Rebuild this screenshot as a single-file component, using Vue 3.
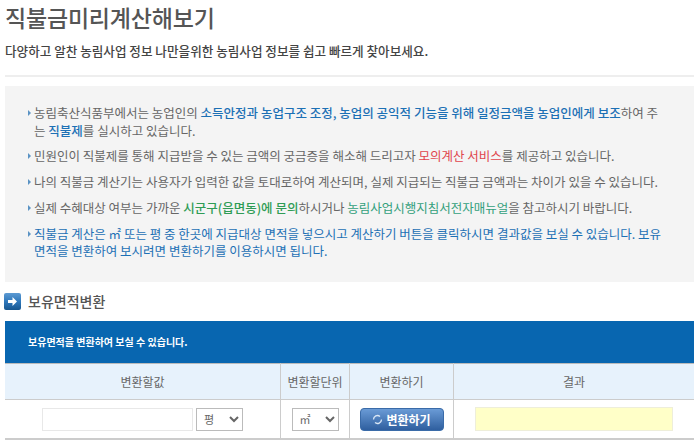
<template>
  <div class="page">
    <h1 class="title">직불금미리계산해보기</h1>
    <p class="lead">다양하고 알찬 농림사업 정보 나만을위한 농림사업 정보를 쉽고 빠르게 찾아보세요.</p>
    <hr class="rule" />

    <ul class="guide">
      <li>
        농림축산식품부에서는 농업인의 <b class="blue">소득안정과 농업구조 조정, 농업의 공익적 기능을 위해 일정금액을 농업인에게 보조</b>하여 주는 <b class="blue">직불제</b>를 실시하고 있습니다.
      </li>
      <li>민원인이 직불제를 통해 지급받을 수 있는 금액의 궁금증을 해소해 드리고자 <span class="red">모의계산 서비스</span>를 제공하고 있습니다.</li>
      <li>나의 직불금 계산기는 사용자가 입력한 값을 토대로하여 계산되며, 실제 지급되는 직불금 금액과는 차이가 있을 수 있습니다.</li>
      <li>실제 수혜대상 여부는 가까운 <b class="green">시군구(읍면동)에 문의</b>하시거나 <span class="teal">농림사업시행지침서전자매뉴얼</span>을 참고하시기 바랍니다.</li>
      <li class="blue">직불금 계산은 ㎡ 또는 평 중 한곳에 지급대상 면적을 넣으시고 계산하기 버튼을 클릭하시면 결과값을 보실 수 있습니다. 보유면적을 변환하여 보시려면 변환하기를 이용하시면 됩니다.</li>
    </ul>

    <h2 class="section">
      <svg class="section-icon" width="17" height="17" viewBox="0 0 17 17">
        <defs>
          <linearGradient id="iconFill" x1="0" y1="0" x2="0" y2="1">
            <stop offset="0" stop-color="#5c9ad2" />
            <stop offset="0.5" stop-color="#2f78bc" />
            <stop offset="1" stop-color="#17568f" />
          </linearGradient>
        </defs>
        <rect width="17" height="17" rx="2" fill="url(#iconFill)" />
        <path d="M4 7h4.500V4L13 8.500 8.500 13v-3H4z" fill="#fff" />
      </svg>
      보유면적변환
    </h2>

    <div class="banner">보유면적을 변환하여 보실 수 있습니다.</div>
    <table class="convert">
      <thead>
        <tr>
          <th class="col-value">변환할값</th>
          <th class="col-unit">변환할단위</th>
          <th class="col-action">변환하기</th>
          <th>결과</th>
        </tr>
      </thead>
      <tbody>
        <tr>
          <td>
            <div class="value-cell">
              <input class="field" type="text" />
              <select class="unit">
                <option>평</option>
              </select>
            </div>
          </td>
          <td>
            <select class="unit">
              <option>㎡</option>
            </select>
          </td>
          <td>
            <button class="convert-btn" type="button">
              <svg width="11" height="11" viewBox="0 0 11 11" fill="none" stroke="#dbe8f6" stroke-width="1.300">
                <path d="M1.500 5.500A4 4 0 0 1 8 2.400" />
                <path d="M9.500 5.500A4 4 0 0 1 3 8.600" />
              </svg>
              변환하기
            </button>
          </td>
          <td>
            <input class="result" type="text" readonly />
          </td>
        </tr>
      </tbody>
    </table>
  </div>
</template>

<script setup>
</script>

<style>
body {
  background: #fff;
}
</style>

<style scoped>
.page {
  width: 700px;
  height: 448px;
  overflow: hidden;
  box-sizing: border-box;
  padding: 0 6px 0 5px;
  font-family: "Noto Sans CJK KR", "Noto Sans", sans-serif;
  color: #555;
}

.title {
  margin: 0;
  padding-top: 2px;
  font-size: 23px;
  line-height: 30px;
  font-weight: 500;
  letter-spacing: -0.2px;
  color: #555;
}

.lead {
  margin: 10px 0 0;
  font-size: 12.600px;
  line-height: 18px;
  font-weight: 500;
  color: #444;
}

.rule {
  margin: 15px 0 0;
  border: 0;
  border-top: 2px solid #eee;
}

.guide {
  margin: 9px 0 0;
  height: 196px;
  box-sizing: border-box;
  padding: 18px 26px 0 23px;
  list-style: none;
  background: #f4f4f4;
  font-size: 12.500px;
  line-height: 17.500px;
  color: #666;
}

.guide li {
  position: relative;
  margin-bottom: 8.300px;
  padding-left: 6px;
}

.guide li::before {
  content: '';
  position: absolute;
  left: 0;
  top: 6px;
  border-left: 3px solid #5b93c4;
  border-top: 3px solid transparent;
  border-bottom: 3px solid transparent;
}

.guide b {
  font-weight: 500;
}

.blue {
  color: #1c70b5;
}

.red {
  color: #e0444c;
}

.green {
  color: #2f9c55;
}

.teal {
  color: #33a07c;
}

.section {
  display: flex;
  align-items: center;
  gap: 7px;
  margin: 10px 0 0;
  height: 18px;
  font-size: 14px;
  line-height: 18px;
  font-weight: 500;
  color: #555;
}

.section-icon {
  flex: none;
  margin-left: -1px;
}

.banner {
  margin-top: 11px;
  height: 42px;
  box-sizing: border-box;
  padding: 13px 0 0 23px;
  background: #0866b0;
  font-size: 10px;
  line-height: 16px;
  font-weight: 700;
  color: #fff;
}

.convert {
  width: 689px;
  table-layout: fixed;
  border-collapse: collapse;
  border-top: 1px solid #bbb;
  border-bottom: 2px solid #ccc;
  font-size: 12px;
}

.convert th {
  height: 35px;
  padding: 0;
  background: #e7f2fc;
  border-bottom: 1px solid #ccc;
  border-left: 1px solid #ccc;
  font-weight: 400;
  color: #666;
}

.convert td {
  height: 38px;
  padding: 0;
  border-left: 1px solid #ccc;
  text-align: center;
}

.convert th:first-child,
.convert td:first-child {
  border-left: 0;
}

.col-value {
  width: 275px;
}

.col-unit {
  width: 68px;
}

.col-action {
  width: 103px;
}

.value-cell {
  display: flex;
  justify-content: center;
  gap: 3px;
}

.field {
  width: 151px;
  height: 23px;
  box-sizing: border-box;
  border: 1px solid #e8e8e8;
  background: #fff;
}

.unit {
  width: 47px;
  height: 23px;
  box-sizing: border-box;
  padding-left: 3px;
  border: 1px solid #bbb;
  border-radius: 0;
  background: #fff;
  font-family: inherit;
  font-size: 11px;
  color: #666;
}

.convert-btn {
  display: inline-flex;
  align-items: center;
  justify-content: center;
  gap: 3px;
  width: 84px;
  height: 23px;
  padding: 0;
  border: 1px solid #3a6ba8;
  border-radius: 4px;
  background: linear-gradient(#6a9bd6, #2f5f9f);
  font-family: inherit;
  font-size: 12px;
  font-weight: 700;
  color: #fff;
}

.result {
  display: block;
  width: 198px;
  height: 24px;
  margin: 0 auto;
  box-sizing: border-box;
  border: 1px solid #eeeeda;
  background: #ffffc8;
}
</style>
